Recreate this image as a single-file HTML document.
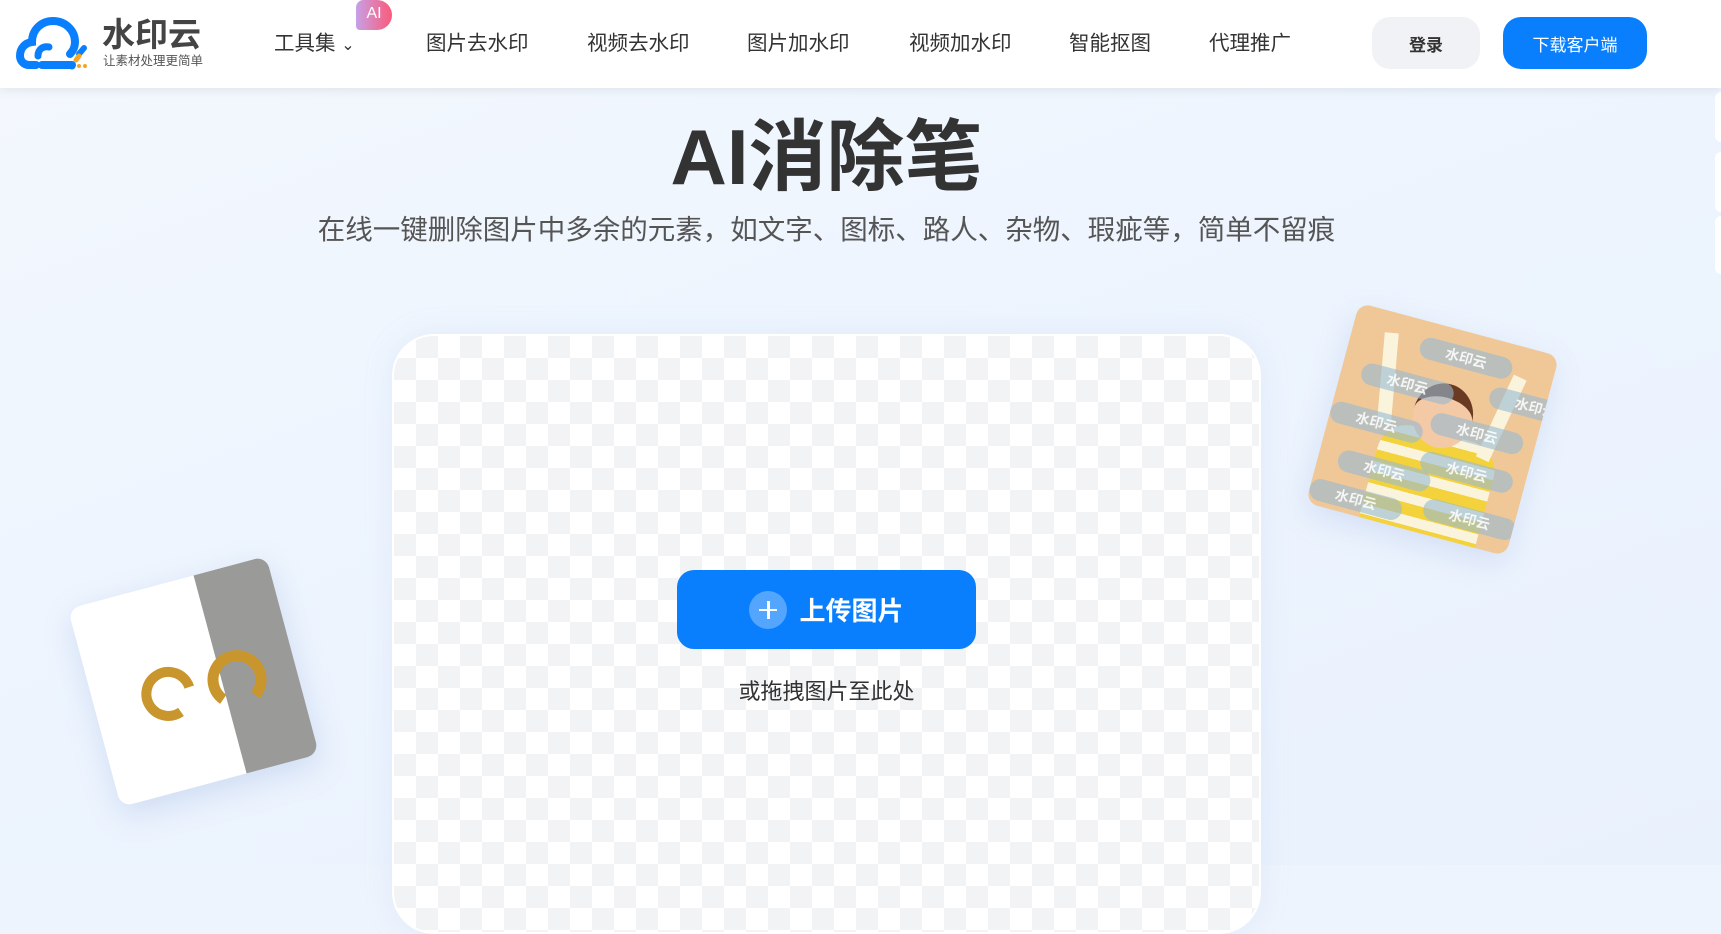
<!DOCTYPE html>
<html><head><meta charset="utf-8"><style>
*{margin:0;padding:0;box-sizing:border-box}
html{background:#eef4fd}
body{width:1721px;height:865px;overflow:hidden;position:relative;font-family:"Liberation Sans","Noto Sans CJK SC",sans-serif;background:linear-gradient(160deg,#f4f8fd 0%,#eef5fe 40%,#e9f1fd 100%);}
.hdr{position:absolute;left:0;top:0;width:1721px;height:88px;background:#fff;box-shadow:0 2px 10px rgba(0,0,0,.08);z-index:5}
.nav{position:absolute;top:29px;font-size:20.5px;color:#333;line-height:30px}
.btn{position:absolute;top:17px;height:52px;border-radius:18px;font-size:17px;display:flex;align-items:center;justify-content:center;font-weight:bold}
.title{position:absolute;left:0;width:1653px;top:112px;text-align:center;font-size:78px;font-weight:bold;color:#333;line-height:90px}
.sub{position:absolute;left:0;width:1653px;top:212px;text-align:center;font-size:27.5px;color:#555;line-height:36px}
.card{position:absolute;left:392px;top:334px;width:869px;height:600px;border-radius:42px;border:2px solid #fff;
background-color:#fff;background-image:linear-gradient(45deg,#f2f3f5 25%,transparent 25%,transparent 75%,#f2f3f5 75%),linear-gradient(45deg,#f2f3f5 25%,transparent 25%,transparent 75%,#f2f3f5 75%);background-size:44px 44px;background-position:0 0,22px 22px;box-shadow:0 0 30px rgba(150,180,230,.15)}
.up{position:absolute;left:677px;top:570px;width:299px;height:79px;border-radius:17px;background:#0a7ffe;color:#fff;font-size:26px;font-weight:bold;display:flex;align-items:center;justify-content:center}
.pl{width:38px;height:38px;border-radius:50%;background:rgba(255,255,255,.3);margin-right:12px;position:relative}
.pl:before{content:"";position:absolute;left:10px;top:18px;width:18px;height:2.5px;background:#fff}
.pl:after{content:"";position:absolute;left:17.7px;top:10px;width:2.5px;height:18px;background:#fff}
.img1{position:absolute;left:91px;top:579px;width:205px;height:205px;border-radius:12px;transform:rotate(-15deg);overflow:hidden;background:#fff;box-shadow:0 10px 30px rgba(120,150,210,.25)}
.img2{position:absolute;left:1329px;top:326px;width:207px;height:207px;border-radius:12px;transform:rotate(15deg);overflow:hidden;background:#f0c898;box-shadow:0 10px 30px rgba(120,150,210,.2)}
.wm{position:absolute;height:22px;width:95px;border-radius:11px;background:rgba(150,185,210,.6);color:rgba(255,255,255,.85);font-size:14px;font-weight:bold;text-align:center;line-height:22px}
</style></head><body>
<div class="hdr">
 <svg style="position:absolute;left:16px;top:16px" width="78" height="56" viewBox="0 0 78 56">
  <path d="M20 49 H13 A9 9 0 0 1 4 40 C4 32 9 27 16 26 C16 13 26 5 37 5 C49 5 59 14 59 26 C59 31 57 35 54 38" fill="none" stroke="#0a7ffe" stroke-width="8" stroke-linecap="round"/>
  <path d="M22 40 C22 33 27 30 33 31" fill="none" stroke="#0a7ffe" stroke-width="7" stroke-linecap="round"/>
  <path d="M26 49 H56" stroke="#0a7ffe" stroke-width="8" stroke-linecap="round"/>
  <path d="M63 38 L68 32" stroke="#0a7ffe" stroke-width="6" stroke-linecap="round"/>
  <path d="M60 44 L63 40" stroke="#f5a623" stroke-width="5" stroke-linecap="round"/>
  <circle cx="56" cy="50" r="3.5" fill="#0a7ffe"/><circle cx="63" cy="50" r="2" fill="#f5a623"/><circle cx="69" cy="50" r="2" fill="#f5a623"/>
 </svg>
 <div style="position:absolute;left:102px;top:17px;font-size:33px;font-weight:bold;color:#444;line-height:36px">水印云</div>
 <div style="position:absolute;left:103px;top:54px;font-size:12.5px;color:#555;line-height:15px">让素材处理更简单</div>
 <div class="nav" style="left:274px">工具集 <span style="font-size:16px">&#8964;</span></div>
 <div style="position:absolute;left:356px;top:0;width:36px;height:30px;background:linear-gradient(90deg,#c7a0e6,#fb5a7a);color:#fff;font-size:16px;text-align:center;line-height:28px;border-radius:8px 16px 16px 4px">AI</div>
 <div class="nav" style="left:426px">图片去水印</div>
 <div class="nav" style="left:587px">视频去水印</div>
 <div class="nav" style="left:747px">图片加水印</div>
 <div class="nav" style="left:909px">视频加水印</div>
 <div class="nav" style="left:1069px">智能抠图</div>
 <div class="nav" style="left:1209px">代理推广</div>
 <div class="btn" style="left:1372px;width:108px;background:#f0f2f5;color:#333">登录</div>
 <div class="btn" style="left:1503px;width:144px;background:#0a7ffe;color:#fff;font-weight:normal">下载客户端</div>
</div>
<div style="position:absolute;right:0;top:92px;width:6px;height:50px;background:#fff;border-radius:6px 0 0 6px"></div>
<div style="position:absolute;right:0;top:152px;width:6px;height:60px;background:#fff;border-radius:6px 0 0 6px"></div>
<div style="position:absolute;right:0;top:216px;width:6px;height:58px;background:#fff;border-radius:6px 0 0 6px"></div>
<div class="title">AI消除笔</div>
<div class="sub">在线一键删除图片中多余的元素，如文字、图标、路人、杂物、瑕疵等，简单不留痕</div>
<div class="card"></div>
<div class="up"><span class="pl"></span>上传图片</div>
<div style="position:absolute;left:0;width:1653px;top:677px;text-align:center;font-size:22px;color:#333;line-height:30px">或拖拽图片至此处</div>
<div class="img1">
 <div style="position:absolute;left:130px;top:0;width:80px;height:210px;background:#9a9a98"></div>
 <svg style="position:absolute;left:0;top:0" width="205" height="205">
  <circle cx="75" cy="108" r="22" fill="none" stroke="#c9962e" stroke-width="10" stroke-dasharray="110 40" transform="rotate(70 75 108)"/>
  <circle cx="145" cy="112" r="24" fill="none" stroke="#c9962e" stroke-width="11" stroke-dasharray="115 40" transform="rotate(140 145 112)"/>
 </svg>
</div>
<div class="img2">
 <div style="position:absolute;left:55px;top:105px;width:120px;height:110px;background:repeating-linear-gradient(0deg,#f4d23c 0 12px,#fbf4dc 12px 22px);border-radius:30px 30px 0 0"></div>
 <div style="position:absolute;left:80px;top:55px;width:60px;height:65px;border-radius:50%;background:#f3c9a6;border-top:14px solid #6b3a22"></div>
 <div style="position:absolute;left:40px;top:20px;width:14px;height:90px;background:#fbf4dc;transform:rotate(-10deg)"></div>
 <div style="position:absolute;left:160px;top:30px;width:14px;height:90px;background:#fbf4dc;transform:rotate(10deg)"></div>
 <div class="wm" style="left:70px;top:15px">水印云</div>
 <div class="wm" style="left:150px;top:45px">水印云</div>
 <div class="wm" style="left:20px;top:55px">水印云</div>
 <div class="wm" style="left:100px;top:85px">水印云</div>
 <div class="wm" style="left:0;top:100px">水印云</div>
 <div class="wm" style="left:100px;top:125px">水印云</div>
 <div class="wm" style="left:20px;top:145px">水印云</div>
 <div class="wm" style="left:115px;top:170px">水印云</div>
 <div class="wm" style="left:0;top:180px">水印云</div>
</div>
</body></html>
